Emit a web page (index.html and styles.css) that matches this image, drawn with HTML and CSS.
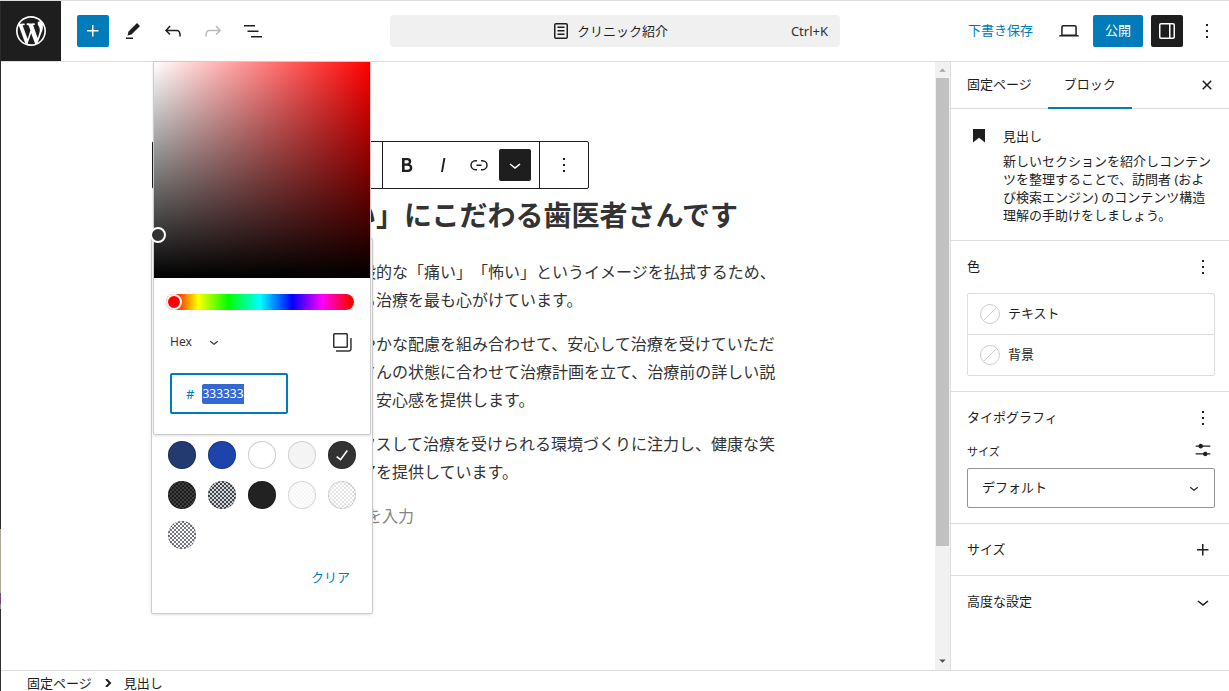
FILE: index.html
```html
<!DOCTYPE html>
<html lang="ja">
<head>
<meta charset="utf-8">
<meta name="viewport" content="width=device-width, initial-scale=1">
<title>クリニック紹介</title>
<link rel="stylesheet" href="styles.css">
</head>
<body>
<div class="app">
  <header class="topbar">
    <div class="topbar-left">
      <a class="site-logo" href="#" aria-label="WordPress"><svg viewBox="-2 -2 24 24"><path d="M20 10c0-5.51-4.49-10-10-10C4.48 0 0 4.49 0 10c0 5.52 4.48 10 10 10 5.51 0 10-4.48 10-10zM7.78 15.37L4.37 6.22c.55-.02 1.17-.08 1.17-.08.5-.06.44-1.13-.06-1.11 0 0-1.45.11-2.37.11-.18 0-.37 0-.58-.01C4.12 2.69 6.87 1.11 10 1.11c2.33 0 4.45.87 6.05 2.34-.68-.11-1.65.39-1.65 1.58 0 .74.45 1.36.9 2.1.35.61.55 1.36.55 2.46 0 1.49-1.4 5-1.4 5l-3.03-8.37c.54-.02.82-.17.82-.17.5-.05.44-1.25-.06-1.22 0 0-1.44.12-2.38.12-.87 0-2.33-.12-2.33-.12-.5-.03-.56 1.2-.06 1.22l.92.08 1.26 3.41zM17.41 10c.24-.64.74-1.87.43-4.25.7 1.29 1.05 2.71 1.05 4.25 0 3.29-1.73 6.24-4.4 7.78.97-2.59 1.94-5.2 2.92-7.78zM6.1 18.09C3.12 16.65 1.11 13.53 1.11 10c0-1.3.23-2.48.72-3.59C3.25 10.3 4.67 14.2 6.1 18.09zm4.03-6.63l2.58 6.98c-.86.29-1.76.45-2.71.45-.79 0-1.57-.11-2.29-.33.81-2.38 1.62-4.74 2.42-7.1z"/></svg></a>
      <div class="tools">
        <button class="icon-btn primary" aria-label="追加"><svg class="icon" viewBox="0 0 24 24"><path d="M11 12.5V17.5H12.5V12.5H17.5V11H12.5V6H11V11H6V12.5H11Z"/></svg></button>
        <button class="icon-btn" aria-label="ツール"><svg class="icon" viewBox="0 0 24 24"><path d="m19 7-3-3-8.500 8.500-1 4 4-1L19 7Zm-7 11.500H5V20h7v-1.500Z"/></svg></button>
        <button class="icon-btn" aria-label="元に戻す"><svg class="icon" viewBox="0 0 24 24"><path d="M18.3 11.7c-.6-.6-1.400-.9-2.300-.9H6.700l2.900-3.300-1.100-1-4.500 5L8.500 16l1-1-2.700-2.700H16c.5 0 .9.2 1.300.5 1 1 1 3.400 1 4.500v.3h1.500v-.2c0-1.500 0-4.300-1.500-5.700z"/></svg></button>
        <button class="icon-btn" aria-label="やり直す" disabled><svg class="icon" viewBox="0 0 24 24"><path d="M15.600 6.500l-1.100 1 2.900 3.300H8c-.9 0-1.700.3-2.300.9-1.400 1.500-1.400 4.200-1.400 5.600v.2h1.500v-.3c0-1.100 0-3.500 1-4.500.3-.3.7-.5 1.300-.5h9.200L14.500 15l1.100 1.100 4.600-4.600-4.600-5z"/></svg></button>
        <button class="icon-btn" aria-label="リスト表示"><svg class="icon" viewBox="0 0 24 24"><path d="M3 6h11v1.500H3V6Zm3.500 5.500h11V13h-11v-1.500ZM21 17H10v1.500h11V17Z"/></svg></button>
      </div>
    </div>
    <button class="command-bar">
      <span class="command-title"><svg class="icon" viewBox="0 0 24 24"><path d="M15.500 7.500h-7V9h7V7.500Zm-7 3.500h7v1.500h-7V11Zm7 3.500h-7V16h7v-1.500Z"/><path fill-rule="evenodd" d="M17 4H7a2 2 0 0 0-2 2v12a2 2 0 0 0 2 2h10a2 2 0 0 0 2-2V6a2 2 0 0 0-2-2ZM7 5.500h10a.5.5 0 0 1 .5.5v12a.5.5 0 0 1-.5.5H7a.5.5 0 0 1-.5-.5V6a.5.5 0 0 1 .5-.5Z"/></svg>クリニック紹介</span>
      <span class="command-key">Ctrl+K</span>
    </button>
    <div class="topbar-right">
      <button class="text-btn">下書き保存</button>
      <button class="icon-btn" aria-label="表示"><svg class="icon" viewBox="0 0 24 24"><path d="M20.500 16h-.7V8c0-1.100-.9-2-2-2H6.200c-1.100 0-2 .9-2 2v8h-.7c-.8 0-1.500.7-1.500 1.500h20c0-.8-.7-1.500-1.500-1.500zM5.700 8c0-.3.2-.5.5-.5h11.600c.3 0 .5.2.5.5v7.600H5.700V8z"/></svg></button>
      <button class="publish-btn">公開</button>
      <button class="icon-btn pressed" aria-label="設定"><svg class="icon" viewBox="0 0 24 24"><path d="M18 4H6c-1.100 0-2 .9-2 2v12c0 1.100.9 2 2 2h12c1.100 0 2-.9 2-2V6c0-1.100-.9-2-2-2zm-4 14.500H6c-.3 0-.5-.2-.5-.5V6c0-.3.2-.5.5-.5h8v13zm4.500-.5c0 .3-.2.5-.5.5h-2.500v-13H18c.3 0 .5.2.5.5v12z"/></svg></button>
      <button class="icon-btn" aria-label="オプション"><svg class="icon" viewBox="0 0 24 24"><path d="M13 19h-2v-2h2v2zm0-6h-2v-2h2v2zm0-6h-2V5h2v2z"/></svg></button>
    </div>
  </header>

  <div class="workspace">
    <main class="canvas">
      <div class="content">
        <div class="toolbar">
          <div class="toolbar-group covered"></div>
          <div class="toolbar-group">
            <button class="tool" aria-label="太字"><svg class="icon" viewBox="0 0 24 24"><path d="M14.700 11.300c1-.6 1.500-1.600 1.500-3 0-2.300-1.300-3.400-4-3.400H7v14h5.800c1.400 0 2.500-.3 3.300-1 .8-.7 1.200-1.700 1.200-2.900.1-1.900-.8-3.100-2.600-3.700zm-5.100-4h2.300c.6 0 1.100.1 1.400.4.3.3.5.7.5 1.200s-.2 1-.5 1.200c-.3.3-.8.4-1.400.4H9.600V7.300zm4.600 9c-.4.3-1 .4-1.700.4H9.600v-3.900h2.900c.7 0 1.300.2 1.700.5.4.3.6.8.6 1.500s-.2 1.200-.6 1.500z"/></svg></button>
            <button class="tool" aria-label="イタリック"><svg class="icon" viewBox="0 0 24 24"><path d="M12.500 5L10 19h1.900l2.500-14z"/></svg></button>
            <button class="tool" aria-label="リンク"><svg class="icon small" viewBox="2 2 20 20"><path d="M10 17.389H8.444A5.194 5.194 0 1 1 8.444 7H10v1.500H8.444a3.694 3.694 0 0 0 0 7.389H10v1.500ZM14 7h1.556a5.194 5.194 0 0 1 0 10.390H14v-1.500h1.556a3.694 3.694 0 0 0 0-7.390H14V7Zm-4.500 6h5v-1.500h-5V13Z"/></svg></button>
            <button class="tool" aria-label="さらに表示"><span class="tool-active"><svg class="icon" viewBox="0 0 24 24"><path d="M17.500 11.600L12 16l-5.500-4.400.9-1.200L12 14l4.500-3.600 1 1.200z"/></svg></span></button>
          </div>
          <div class="toolbar-group last">
            <button class="tool" aria-label="オプション"><svg class="icon" viewBox="0 0 24 24"><path d="M13 19h-2v-2h2v2zm0-6h-2v-2h2v2zm0-6h-2V5h2v2z"/></svg></button>
          </div>
        </div>
        <h2 class="heading">い」にこだわる歯医者さんです</h2>
        <p class="para">般的な「痛い」「怖い」というイメージを払拭するため、<br>る治療を最も心がけています。</p>
        <p class="para">やかな配慮を組み合わせて、安心して治療を受けていただ<br>さんの状態に合わせて治療計画を立て、治療前の詳しい説<br>、安心感を提供します。</p>
        <p class="para">クスして治療を受けられる環境づくりに注力し、健康な笑<br>アを提供しています。</p>
        <p class="para placeholder">を入力</p>
      </div>

      <div class="palette-popover">
        <div class="swatches">
          <button class="swatch navy" aria-label="紺"></button>
          <button class="swatch blue" aria-label="青"></button>
          <button class="swatch white" aria-label="白"></button>
          <button class="swatch light" aria-label="薄いグレー"></button>
          <button class="swatch dark" aria-label="濃いグレー"><svg class="icon" viewBox="0 0 24 24"><path d="M16.700 7.100l-6.300 8.500-3.300-2.500-.9 1.200 4.500 3.400L17.900 8z"/></svg></button>
          <button class="swatch check-dark" aria-label="半透明の黒"></button>
          <button class="swatch check-mid" aria-label="半透明の濃いグレー"></button>
          <button class="swatch black" aria-label="黒"></button>
          <button class="swatch check-faint" aria-label="半透明の白"></button>
          <button class="swatch check-light" aria-label="半透明の薄いグレー"></button>
          <button class="swatch check-gray" aria-label="半透明のグレー"></button>
        </div>
        <button class="clear-btn">クリア</button>
      </div>

      <div class="picker-popover">
        <div class="saturation"><span class="pointer"></span></div>
        <div class="picker-controls">
          <input class="hue" type="range" min="0" max="359" value="0" aria-label="色相">
          <div class="format-row">
            <span class="format">
              <select aria-label="カラー形式"><option>Hex</option></select>
              <svg class="icon tiny" viewBox="0 0 24 24"><path d="M17.500 11.600L12 16l-5.500-4.400.9-1.200L12 14l4.500-3.600 1 1.200z"/></svg>
            </span>
            <button class="copy-btn" aria-label="コピー"><svg class="icon" viewBox="0 0 24 24"><path d="M20.200 8v11c0 .7-.6 1.200-1.200 1.200H6v1.500h13c1.500 0 2.700-1.200 2.700-2.800V8zM18 16.400V4.600c0-.9-.7-1.600-1.600-1.600H4.600C3.700 3 3 3.700 3 4.600v11.800c0 .9.7 1.600 1.600 1.600h11.800c.9 0 1.600-.7 1.600-1.600zm-13.500 0V4.600c0-.1.1-.1.1-.1h11.800c.1 0 .1.1.1.1v11.800c0 .1-.1.1-.1.1H4.600l-.1-.1z"/></svg></button>
          </div>
          <label class="hex-field"><span>#</span><input class="hex-input" type="text" value="333333" aria-label="Hex カラー"></label>
        </div>
      </div>
    </main>

    <div class="scrollbar" aria-hidden="true">
      <svg class="arrow up" viewBox="0 0 16 16"><path d="M4 10h8L8 6z"/></svg>
      <div class="thumb"></div>
      <div class="rest"></div>
      <svg class="arrow down" viewBox="0 0 16 16"><path d="M4 5h8l-4 4z"/></svg>
    </div>

    <aside class="sidebar">
      <div class="tabs">
        <button class="tab">固定ページ</button>
        <button class="tab active">ブロック</button>
        <button class="close-btn" aria-label="閉じる"><svg class="icon" viewBox="0 0 24 24"><path d="M12 13.060l3.712 3.713 1.061-1.060L13.061 12l3.712-3.712-1.060-1.060L12 10.938 8.288 7.227l-1.061 1.060L10.939 12l-3.712 3.712 1.060 1.061L12 13.061z"/></svg></button>
      </div>
      <section class="block-card">
        <svg class="icon" viewBox="0 0 24 24"><path d="M6 5V18.591L12 13.847L18 18.591V5H6Z"/></svg>
        <div class="block-info">
          <h2 class="block-title">見出し</h2>
          <p class="block-desc">新しいセクションを紹介しコンテンツを整理することで、訪問者 (および検索エンジン) のコンテンツ構造理解の手助けをしましょう。</p>
        </div>
      </section>
      <section class="panel">
        <div class="panel-head">
          <h3>色</h3>
          <button class="panel-btn" aria-label="色のオプション"><svg class="icon" viewBox="0 0 24 24"><path d="M13 19h-2v-2h2v2zm0-6h-2v-2h2v2zm0-6h-2V5h2v2z"/></svg></button>
        </div>
        <div class="color-list">
          <button class="color-row"><svg class="none" viewBox="0 0 20 20"><circle cx="10" cy="10" r="9.500"/><path d="M3.500 16.500l13-13"/></svg><span class="color-name">テキスト</span></button>
          <button class="color-row"><svg class="none" viewBox="0 0 20 20"><circle cx="10" cy="10" r="9.500"/><path d="M3.500 16.500l13-13"/></svg><span class="color-name">背景</span></button>
        </div>
      </section>
      <section class="panel">
        <div class="panel-head">
          <h3>タイポグラフィ</h3>
          <button class="panel-btn" aria-label="タイポグラフィのオプション"><svg class="icon" viewBox="0 0 24 24"><path d="M13 19h-2v-2h2v2zm0-6h-2v-2h2v2zm0-6h-2V5h2v2z"/></svg></button>
        </div>
        <div class="size-head">
          <label for="font-size">サイズ</label>
          <button class="panel-btn" aria-label="カスタムサイズ"><svg class="icon slider" viewBox="0 0 24 24"><path d="M14.500 13.800c-1.100 0-2.100.7-2.400 1.800H4V17h8.100c.3 1 1.300 1.800 2.400 1.800s2.100-.7 2.400-1.800H20v-1.500h-3.100c-.3-1-1.300-1.700-2.400-1.700zM11.900 7c-.3-1-1.300-1.800-2.400-1.800S7.400 6 7.100 7H4v1.500h3.100c.3 1 1.300 1.800 2.400 1.800s2.100-.7 2.400-1.800H20V7h-8.100z"/></svg></button>
        </div>
        <div class="size-select">
          <select id="font-size"><option>デフォルト</option></select>
          <svg class="icon tiny" viewBox="0 0 24 24"><path d="M17.500 11.600L12 16l-5.500-4.400.9-1.200L12 14l4.500-3.600 1 1.200z"/></svg>
        </div>
      </section>
      <section class="panel">
        <div class="panel-head">
          <h3>サイズ</h3>
          <button class="panel-btn" aria-label="サイズのオプション"><svg class="icon" viewBox="0 0 24 24"><path d="M11 12.500V17.500H12.500V12.500H17.500V11H12.500V6H11V11H6V12.500H11Z"/></svg></button>
        </div>
      </section>
      <section class="panel open-end">
        <div class="panel-head">
          <h3>高度な設定</h3>
          <button class="panel-btn" aria-label="開く"><svg class="icon" viewBox="0 0 24 24"><path d="M17.500 11.600L12 16l-5.500-4.400.9-1.200L12 14l4.500-3.600 1 1.200z"/></svg></button>
        </div>
      </section>
    </aside>
  </div>

  <footer class="breadcrumb">
    <a href="#">固定ページ</a>
    <svg class="crumb-sep" viewBox="0 0 8 8"><path d="M2 0l4 4-4 4"/></svg>
    <span>見出し</span>
  </footer>
</div>
<script src="script.js"></script>
</body>
</html>
```

FILE: styles.css
```css
* {
  box-sizing: border-box;
}

body {
  margin: 0;
  font: 13px/20px "Noto Sans", "Noto Sans CJK JP", sans-serif;
  text-spacing-trim: space-all;
  color: #1e1e1e;
  background: #fff;
}

button,
select,
input {
  margin: 0;
  padding: 0;
  border: 0;
  background: none;
  font: inherit;
  color: inherit;
  border-radius: 2px;
}

h2,
h3,
p {
  margin: 0;
  font-weight: 400;
}

a {
  color: inherit;
  text-decoration: none;
}

select {
  appearance: none;
}

.icon {
  display: block;
  flex: none;
  width: 24px;
  height: 24px;
  fill: currentColor;
}

.icon.small {
  width: 20px;
  height: 20px;
}

.icon.slider {
  width: 22px;
  height: 22px;
}

.icon.tiny {
  width: 18px;
  height: 18px;
}

.app {
  display: grid;
  grid-template-rows: auto minmax(0, 1fr) auto;
  height: 100vh;
  overflow: hidden;
  padding-left: 1px;
  border-top: 1px solid #ddd;
  background: linear-gradient(#2b2b2b 0 528px, #a9a792 528px 592px, #6d4c70 592px 603px, #8c8f96 603px 608px, #2f2f33 608px) left / 1px 100% no-repeat;
}

/* Top bar */

.topbar {
  display: grid;
  grid-template-columns: minmax(0, 1fr) 450px minmax(0, 1fr);
  align-items: center;
  height: 61px;
  border-bottom: 1px solid #ddd;
  background: #fff;
}

.topbar-left,
.tools,
.topbar-right {
  display: flex;
  align-items: center;
}

.topbar-left {
  gap: 16px;
}

.tools,
.topbar-right {
  gap: 8px;
}

.topbar-right {
  justify-content: flex-end;
  padding-right: 6px;
}

.site-logo {
  display: grid;
  place-items: center;
  width: 60px;
  height: 60px;
  background: #1e1e1e;
  color: #fff;
}

.site-logo svg {
  width: 36px;
  height: 36px;
  fill: currentColor;
}

.icon-btn {
  display: grid;
  place-items: center;
  width: 32px;
  height: 32px;
}

.icon-btn.primary {
  background: #007cba;
  color: #fff;
}

.icon-btn.pressed {
  background: #1e1e1e;
  color: #fff;
}

.icon-btn:disabled {
  color: #bbb;
}

.command-bar {
  display: flex;
  align-items: center;
  height: 32px;
  padding: 0 12px 0 36px;
  border-radius: 4px;
  background: #f0f0f0;
}

.command-title {
  display: flex;
  flex: 1;
  align-items: center;
  justify-content: center;
  gap: 4px;
}

.command-key {
  color: #2f2f2f;
}

.text-btn {
  height: 32px;
  padding: 0 12px 2px;
  color: #007cba;
}

.publish-btn {
  height: 32px;
  padding: 0 12px 2px;
  background: #007cba;
  color: #fff;
}

/* Workspace */

.workspace {
  display: grid;
  grid-template-columns: minmax(0, 1fr) 15px 279px;
  min-height: 0;
  background: #fff;
}

.canvas {
  position: relative;
  padding-top: 79px;
  color: #333;
}

.content {
  max-width: 632px;
  margin: 0 auto;
}

.toolbar {
  display: flex;
  width: fit-content;
  height: 48px;
  border: 1px solid #1e1e1e;
  border-radius: 2px;
  color: #1e1e1e;
}

.toolbar-group {
  display: flex;
  align-items: center;
  padding: 0 6px;
  border-right: 1px solid #1e1e1e;
}

.toolbar-group.covered {
  width: 230px;
}

.toolbar-group.last {
  border-right: 0;
}

.tool {
  display: grid;
  place-items: center;
  width: 36px;
  height: 36px;
}

.tool-active {
  display: grid;
  place-items: center;
  width: 32px;
  height: 32px;
  border-radius: 2px;
  background: #1e1e1e;
  color: #fff;
}

.heading {
  margin: 6px 0 23px;
  padding-left: 196px;
  font-size: 28px;
  line-height: 40px;
  font-weight: 700;
  white-space: nowrap;
}

.para {
  margin-bottom: 16px;
  padding-left: 208px;
  font-size: 16px;
  line-height: 28px;
  white-space: nowrap;
}

.para.placeholder {
  padding-left: 214px;
  color: #858585;
}

/* Palette popover */

.palette-popover,
.picker-popover {
  position: absolute;
  border: 1px solid #ccc;
  border-radius: 2px;
  background: #fff;
  box-shadow: 0 1px 3px rgba(0, 0, 0, 0.12);
}

.palette-popover {
  top: 176px;
  left: 150px;
  width: 222px;
  padding: 202px 16px 18px;
}

.swatches {
  display: grid;
  grid-template-columns: repeat(5, 28px);
  gap: 12px;
}

.swatch {
  display: grid;
  place-items: center;
  width: 28px;
  height: 28px;
  border-radius: 50%;
  box-shadow: inset 0 0 0 1px rgba(0, 0, 0, 0.2);
  color: #fff;
}

.swatch.navy { background: #223a70; }
.swatch.blue { background: #1c44ab; }
.swatch.white { background: #fff; }
.swatch.light { background: #f4f4f4; }
.swatch.dark { background: #333; }
.swatch.black { background: #222; }
.swatch.check-dark { background: repeating-conic-gradient(#1c1c1c 0 25%, #404040 0 50%) 0 0 / 4px 4px; }
.swatch.check-mid { background: repeating-conic-gradient(#41454c 0 25%, #d3d5d8 0 50%) 0 0 / 4px 4px; }
.swatch.check-faint { background: repeating-conic-gradient(#f5f6f6 0 25%, #fcfcfc 0 50%) 0 0 / 4px 4px; }
.swatch.check-light { background: repeating-conic-gradient(#e4e4e4 0 25%, #fff 0 50%) 0 0 / 4px 4px; }
.swatch.check-gray { background: repeating-conic-gradient(#74777c 0 25%, #fff 0 50%) 0 0 / 4px 4px; }

.swatch.check-faint,
.swatch.light,
.swatch.check-light {
  box-shadow: inset 0 0 0 1px rgba(0, 0, 0, 0.14);
}

.clear-btn {
  display: block;
  margin: 10px 0 0 auto;
  padding: 8px 6px;
  color: #007cba;
}

/* Color picker popover */

.picker-popover {
  top: -1px;
  left: 152px;
  width: 218px;
}

.saturation {
  position: relative;
  height: 216px;
  background: linear-gradient(to top, #000, transparent), linear-gradient(to right, #fff, #f00);
}

.pointer {
  position: absolute;
  left: -4px;
  bottom: 35px;
  width: 16px;
  height: 16px;
  border: 2px solid #fff;
  border-radius: 50%;
  background: #333;
}

.picker-controls {
  padding: 16px 16px 20px;
}

.hue {
  display: block;
  appearance: none;
  width: 188px;
  height: 16px;
  margin-left: -4px;
  border-radius: 8px;
  background: linear-gradient(to right, #f00 4%, #ff0 17%, #0f0 33%, #0ff 50%, #00f 67%, #f0f 83%, #f00 98%);
}

.hue::-webkit-slider-thumb {
  appearance: none;
  width: 16px;
  height: 16px;
  border: 2px solid #fff;
  border-radius: 50%;
  background: #f00;
}

.format-row {
  display: flex;
  align-items: center;
  justify-content: space-between;
  margin: 16px 0 15px;
}

.format {
  display: flex;
  align-items: center;
}

.format select {
  width: 53px;
  height: 32px;
  margin-right: -18px;
  padding-right: 18px;
  font-size: 12px;
}

.format .icon {
  pointer-events: none;
}

.copy-btn {
  display: grid;
  place-items: center;
}

.hex-field {
  display: flex;
  align-items: center;
  gap: 8px;
  width: 118px;
  height: 41px;
  padding-left: 14px;
  border: 2px solid #007cba;
  border-radius: 2px;
  color: #007cba;
}

.hex-input {
  flex: 1;
  width: 0;
  outline: 0;
  font-size: 12px;
  color: #1e1e1e;
}

.hex-input::selection {
  background: #3367d1;
  color: #fff;
}

/* Scrollbar */

.scrollbar {
  display: flex;
  flex-direction: column;
  padding: 0 1px;
  background: #f1f1f1;
}

.arrow {
  flex: none;
  height: 16px;
  fill: #505050;
}

.arrow.up {
  fill: #a3a3a3;
}

.thumb {
  flex: 468;
  background: #c1c1c1;
}

.rest {
  flex: 108;
}

/* Sidebar */

.sidebar {
  min-width: 0;
  overflow: hidden;
  border-left: 1px solid #ddd;
}

.tabs {
  display: flex;
  height: 47px;
  border-bottom: 1px solid #ddd;
}

.tab {
  height: 47px;
  padding: 0 16px 1px;
  border-bottom: 2px solid transparent;
  border-radius: 0;
}

.tab.active {
  border-bottom-color: #007cba;
}

.close-btn {
  margin: 0 10px 0 auto;
}

.block-card {
  display: flex;
  gap: 12px;
  padding: 15px 16px 16px;
  border-bottom: 1px solid #ddd;
}

.block-title {
  margin-bottom: 4px;
  font-size: 13px;
  line-height: 24px;
}

.block-desc {
  line-height: 18px;
}

.panel {
  padding: 16px 14px 15px 16px;
  border-bottom: 1px solid #ddd;
}

.panel.open-end {
  border-bottom: 0;
}

.panel-head,
.size-head {
  display: flex;
  align-items: center;
  justify-content: space-between;
  height: 20px;
}

.panel-head h3 {
  padding-bottom: 2px;
  font-size: 13px;
}

.panel-btn {
  display: grid;
  place-items: center;
  width: 24px;
  height: 24px;
}

.color-list {
  margin-top: 16px;
  border: 1px solid #ddd;
  border-radius: 2px;
}

.color-row {
  display: flex;
  align-items: center;
  gap: 8px;
  width: 100%;
  height: 40px;
  padding: 0 12px;
}

.color-row + .color-row {
  height: 41px;
  border-top: 1px solid #ddd;
  border-radius: 0;
}

.color-name {
  padding-bottom: 2px;
}

.none {
  width: 20px;
  height: 20px;
  fill: none;
  stroke: #ccc;
}

.size-head {
  height: 24px;
  margin: 10px 0 6px;
  font-size: 11px;
}

.size-head label {
  padding-top: 3px;
}

.size-select {
  display: flex;
  align-items: center;
  height: 40px;
  padding-right: 11px;
  border: 1px solid #949494;
  border-radius: 2px;
}

.size-select select {
  flex: 1;
  height: 38px;
  margin-right: -18px;
  padding: 0 0 2px 14px;
}

.size-select .icon {
  pointer-events: none;
}

/* Footer */

.breadcrumb {
  display: flex;
  align-items: center;
  gap: 12px;
  height: 21px;
  padding: 4px 0 0 26px;
  border-top: 1px solid #ddd;
  background: #fff;
}

.crumb-sep {
  width: 8px;
  height: 8px;
  fill: none;
  stroke: #1e1e1e;
  stroke-width: 2;
}
```

FILE: script.js
```js
const hexInput = document.querySelector(".hex-input");
hexInput.focus({ preventScroll: true });
hexInput.select();
```
